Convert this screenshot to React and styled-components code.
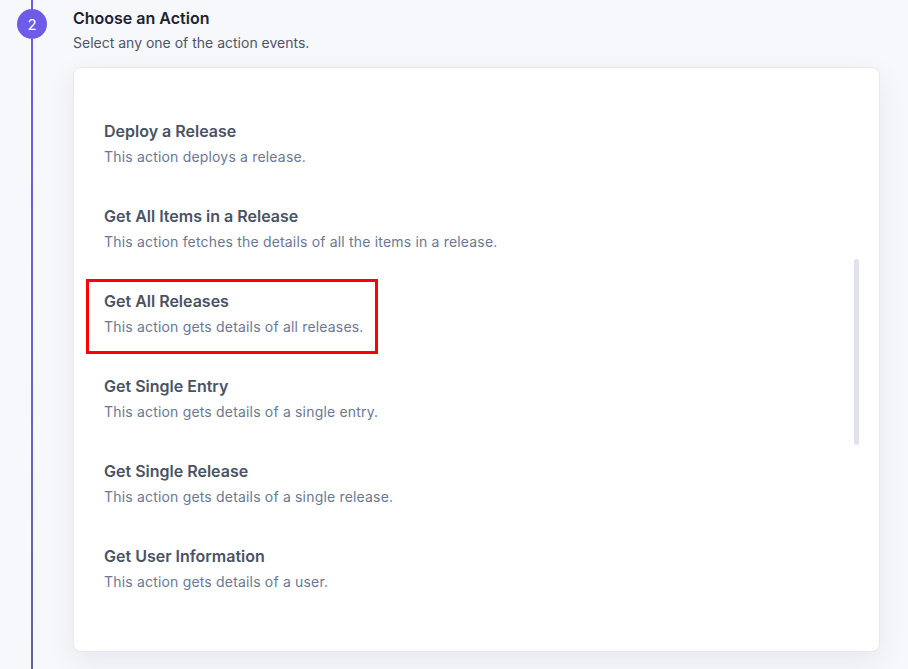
import React from "react";
import styled, { createGlobalStyle } from "styled-components";

const GlobalStyle = createGlobalStyle`
  html, body {
    margin: 0;
    padding: 0;
    background: #f7f8fb;
    font-family: Inter, "Noto Sans", "Liberation Sans", sans-serif;
  }
`;

const Step = styled.div`
  display: flex;
  min-height: 669px;
  padding-right: 28px;
`;

const Rail = styled.div`
  width: 64px;
  flex-shrink: 0;
  display: flex;
  flex-direction: column;
  align-items: center;
  margin-right: 9px;
`;

const LineTop = styled.div`
  width: 2px;
  height: 9px;
  background: #6c5ce7;
`;

const LineBottom = styled.div`
  width: 2px;
  flex: 1;
  background: linear-gradient(#6c5ce7, #6466c6 60%, #5a6796);
`;

const Badge = styled.div`
  width: 30px;
  height: 30px;
  border-radius: 50%;
  background: #6c5ce7;
  color: #fff;
  font-size: 15px;
  display: flex;
  align-items: center;
  justify-content: center;
`;

const Body = styled.div`
  flex: 1;
  padding-top: 7px;
`;

const Heading = styled.div`
  font-size: 16px;
  line-height: 22px;
  font-weight: 600;
  color: #1d2130;
`;

const Sub = styled.div`
  font-size: 14px;
  line-height: 20px;
  color: #4d5566;
  margin-top: 4px;
`;

const Card = styled.div`
  position: relative;
  margin-top: 14px;
  background: #fff;
  border: 1px solid #e7e9ef;
  border-radius: 8px;
  box-shadow: 0 10px 28px rgba(40, 50, 80, 0.08);
  padding: 41px 30px 42px 30px;
  display: flex;
  flex-direction: column;
  gap: 10px;
`;

const Item = styled.div`
  width: fit-content;
  margin-left: -18px;
  padding: 9px 11px 13px 15px;
  border: 3px solid ${(p) => (p.$selected ? "#ff0000" : "transparent")};
`;

const ItemTitle = styled.div`
  font-size: 16px;
  line-height: 20px;
  font-weight: 600;
  color: #4a5265;
`;

const ItemDesc = styled.div`
  font-size: 14px;
  line-height: 22px;
  letter-spacing: 0.18px;
  margin-top: 5px;
  color: #6b7895;
`;

const Thumb = styled.div`
  position: absolute;
  right: 20px;
  top: 191px;
  width: 5px;
  height: 186px;
  border-radius: 3px;
  background: #e1e3ea;
`;

const actions = [
  ["Deploy a Release", "This action deploys a release."],
  ["Get All Items in a Release", "This action fetches the details of all the items in a release."],
  ["Get All Releases", "This action gets details of all releases."],
  ["Get Single Entry", "This action gets details of a single entry."],
  ["Get Single Release", "This action gets details of a single release."],
  ["Get User Information", "This action gets details of a user."],
];

export default function App() {
  return (
    <>
      <GlobalStyle />
      <Step>
        <Rail>
          <LineTop />
          <Badge>2</Badge>
          <LineBottom />
        </Rail>
        <Body>
          <Heading>Choose an Action</Heading>
          <Sub>Select any one of the action events.</Sub>
          <Card>
            {actions.map(([title, desc]) => (
              <Item key={title} $selected={title === "Get All Releases"}>
                <ItemTitle>{title}</ItemTitle>
                <ItemDesc>{desc}</ItemDesc>
              </Item>
            ))}
            <Thumb />
          </Card>
        </Body>
      </Step>
    </>
  );
}
